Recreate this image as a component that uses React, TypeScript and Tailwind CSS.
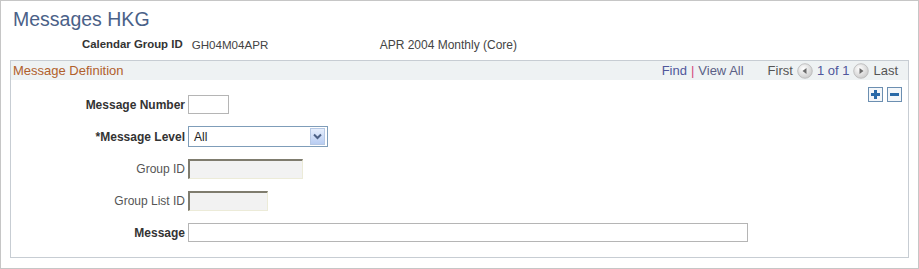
import React from "react"

const Arrow = ({ dir }: { dir: "left" | "right" }) => (
    <svg width="16" height="16" viewBox="0 0 16 16" className="mx-[4px]">
        <defs>
            <radialGradient id={`g-${dir}`} cx="0.4" cy="0.35" r="0.7">
                <stop offset="0" stopColor="#ffffff" />
                <stop offset="1" stopColor="#c9c9c9" />
            </radialGradient>
        </defs>
        <circle cx="8" cy="8" r="7.3" fill={`url(#g-${dir})`} stroke="#b8b8b8" strokeWidth="0.8" />
        {dir === "left" ? (
            <path d="M5.5 8 L9.5 5 L9.5 11 Z" fill="#6b6b6b" />
        ) : (
            <path d="M10.5 8 L6.5 5 L6.5 11 Z" fill="#6b6b6b" />
        )}
    </svg>
)

const Label = ({ text, bold = true }: { text: string; bold?: boolean }) => (
    <div className={`w-[177px] text-right pr-[3px] text-[12px] ${bold ? "font-bold text-[#333]" : "text-[#555]"}`}>
        {text}
    </div>
)

export default function App() {
    return (
        <div
            className="w-[919px] h-[269px] border border-[#c6c6c6] bg-white relative"
            style={{ fontFamily: '"Liberation Sans", Arial, sans-serif' }}
        >
            <div className="pl-[12px] pt-[6px] text-[19.5px] leading-[24px] text-[#4a6188]">Messages HKG</div>

            <div className="flex items-center h-[24px] pl-[81px] text-[12px] mt-[2px]">
                <span className="font-bold text-[11.4px] text-[#333]">Calendar Group ID</span>
                <span className="ml-[9px] text-[#444] w-[188px] text-[11.6px]">GH04M04APR</span>
                <span className="text-[#444]">APR 2004 Monthly (Core)</span>
            </div>

            <div className="ml-[9px] mt-[3px] w-[899px] h-[198px] border border-[#c7cdd3] flex flex-col">
                <div className="flex items-center h-[19px] bg-[#eef2f3] text-[13px]">
                    <span className="pl-[2px] text-[#b1602c]">Message Definition</span>
                    <div className="ml-auto flex items-center pr-[10px]">
                        <span className="text-[#50579b]">Find</span>
                        <span className="mx-[4px] text-[#d44b7c]">|</span>
                        <span className="text-[#5b5f85]">View All</span>
                        <span className="ml-[24px] text-[#555]">First</span>
                        <Arrow dir="left" />
                        <span className="text-[#50579b]">1 of 1</span>
                        <Arrow dir="right" />
                        <span className="text-[#555]">Last</span>
                    </div>
                </div>

                <div className="flex justify-end gap-[4px] pr-[6px] pt-[7px]">
                    <div className="w-[15px] h-[15px] border border-[#6c8fb1] bg-[#f4f7fa] flex items-center justify-center">
                        <svg width="11" height="11" viewBox="0 0 11 11">
                            <rect x="4" y="1" width="3" height="9" fill="#2a6aa8" />
                            <rect x="1" y="4" width="9" height="3" fill="#2a6aa8" />
                        </svg>
                    </div>
                    <div className="w-[15px] h-[15px] border border-[#6c8fb1] bg-[#f4f7fa] flex items-center justify-center">
                        <svg width="11" height="11" viewBox="0 0 11 11">
                            <rect x="1" y="4" width="9" height="3" fill="#2a6aa8" />
                        </svg>
                    </div>
                </div>

                <div className="flex flex-col gap-[12px] mt-[-7px]">
                    <div className="flex items-center">
                        <Label text="Message Number" />
                        <div className="w-[41px] h-[19px] border border-[#b5b5b5] bg-white" />
                    </div>
                    <div className="flex items-center">
                        <Label text="*Message Level" />
                        <div className="w-[140px] h-[21px] border border-[#7f9db9] bg-white flex items-center">
                            <span className="pl-[5px] text-[12px] text-[#222] flex-1">All</span>
                            <div className="w-[15px] h-[17px] mr-[2px] border border-[#b6c8e4] bg-gradient-to-b from-[#e6eefc] to-[#b9cdf2] flex items-center justify-center">
                                <svg width="9" height="7" viewBox="0 0 9 7">
                                    <path d="M1 1.5 L4.5 5 L8 1.5" stroke="#4d6185" strokeWidth="2" fill="none" />
                                </svg>
                            </div>
                        </div>
                    </div>
                    <div className="flex items-center">
                        <Label text="Group ID" bold={false} />
                        <div className="w-[115px] h-[20px] bg-[#f2f2f2] border-t-2 border-l-2 border-b border-r border-t-[#7f7c6e] border-l-[#7f7c6e] border-b-[#ecebd8] border-r-[#ecebd8]" />
                    </div>
                    <div className="flex items-center">
                        <Label text="Group List ID" bold={false} />
                        <div className="w-[80px] h-[20px] bg-[#f2f2f2] border-t-2 border-l-2 border-b border-r border-t-[#7f7c6e] border-l-[#7f7c6e] border-b-[#ecebd8] border-r-[#ecebd8]" />
                    </div>
                    <div className="flex items-center">
                        <Label text="Message" />
                        <div className="w-[560px] h-[19px] border border-[#b5b5b5] bg-white" />
                    </div>
                </div>
            </div>
        </div>
    )
}
